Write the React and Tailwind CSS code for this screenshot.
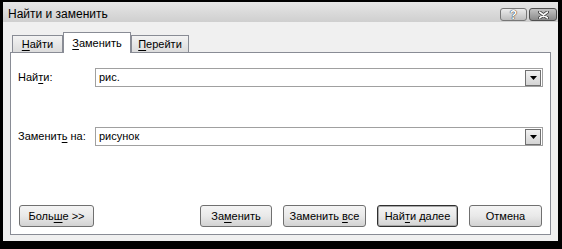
import React from 'react';

const font = { fontFamily: '"Liberation Sans", Arial, sans-serif' };

const U = ({ children }) => <span className="underline underline-offset-[2px]">{children}</span>;

const Tab = ({ active, width, children }) => (
  <div
    className={
      active
        ? `h-[21px] -mb-px z-10 border border-b-0 border-[#898c95] bg-white flex items-center justify-center ${width}`
        : `h-[17px] border border-b-0 border-[#898c95] bg-gradient-to-b from-[#f3f3f3] to-[#dcdcdc] flex items-center justify-center ${width}`
    }
  >
    <span className="text-[11px] text-black leading-none">{children}</span>
  </div>
);

const Combo = ({ value }) => (
  <div className="w-[448px] h-[19px] border border-[#a0a0a0] bg-white flex items-center justify-between pl-[3px] pr-px">
    <span className="text-[11px] text-black leading-none">{value}</span>
    <div className="w-[16px] h-[16px] border border-[#707070] bg-gradient-to-b from-[#f2f2f2] to-[#d4d4d4] flex items-center justify-center">
      <svg width="7" height="4" viewBox="0 0 7 4">
        <path d="M0 0h7L3.5 4z" fill="#000" />
      </svg>
    </div>
  </div>
);

const Button = ({ width, primary, children }) => (
  <div
    className={`h-[22px] rounded-[3px] flex items-center justify-center border bg-gradient-to-b from-[#f4f4f4] via-[#e9e9e9] to-[#d2d2d2] ${width} ${
      primary ? 'border-[#2f2f2f] shadow-[inset_0_0_0_1px_#a8a8a8]' : 'border-[#707070]'
    }`}
  >
    <span className="text-[11px] text-black leading-none">{children}</span>
  </div>
);

export default function App() {
  return (
    <div style={font} className="w-[562px] h-[249px] bg-black pt-[2px] pl-[3px] pr-[4px] pb-[8px]">
      <div className="h-full flex flex-col bg-[#ececec]">
        {/* Title bar */}
        <div className="h-[20px] flex items-start justify-between pl-[5px] pr-px bg-gradient-to-b from-[#e6e6e6] to-[#cfcfcf]">
          <span className="text-[12px] text-black leading-none mt-[6px]">Найти и заменить</span>
          <div className="flex gap-[2px] mt-[6px]">
            <div className="w-[27px] h-[13px] rounded-[3px] border border-[#777] bg-gradient-to-b from-[#ececec] to-[#bdbdbd] flex items-center justify-center">
              <span className="text-[12px] font-bold text-white leading-none [text-shadow:0_0_1px_#222,0_0_1px_#222]">?</span>
            </div>
            <div className="w-[28px] h-[13px] rounded-[3px] border border-[#505050] bg-gradient-to-b from-[#c4c4c4] to-[#8a8a8a] flex items-center justify-center">
              <svg width="11" height="8" viewBox="0 0 11 8">
                <path d="M1.5 1l8 6M9.5 1l-8 6" stroke="#333" strokeWidth="3.2" strokeLinecap="round" />
                <path d="M1.5 1l8 6M9.5 1l-8 6" stroke="#fafafa" strokeWidth="1.6" strokeLinecap="round" />
              </svg>
            </div>
          </div>
        </div>

        {/* Client area */}
        <div className="flex-1 flex flex-col px-[7px] pt-[10px] pb-[6px] bg-[#f0f0f0]">
          <div className="flex items-end pl-[2px]">
            <Tab width="w-[51px]"><U>Н</U>айти</Tab>
            <Tab active width="w-[68px]"><U>З</U>аменить</Tab>
            <Tab width="w-[58px]"><U>П</U>ерейти</Tab>
          </div>
          <div className="flex-1 border border-[#898c95] bg-white flex flex-col px-[7px] pt-[15px] pb-[7px]">
            <div className="flex items-center">
              <span className="w-[77px] text-[11px] text-black leading-none">Най<U>т</U>и:</span>
              <Combo value="рис." />
            </div>
            <div className="flex items-center mt-[40px]">
              <span className="w-[77px] text-[11px] text-black leading-none">Заменит<U>ь</U> на:</span>
              <Combo value="рисунок" />
            </div>
            <div className="flex-1" />
            <div className="flex items-center justify-between pl-px pr-px">
              <Button width="w-[75px]">Боль<U>ш</U>е &gt;&gt;</Button>
              <div className="flex gap-[11px]">
                <Button width="w-[72px]">За<U>м</U>енить</Button>
                <Button width="w-[83px]">Заменить <U>в</U>се</Button>
                <Button primary width="w-[81px]">Най<U>т</U>и далее</Button>
                <Button width="w-[73px]">Отмена</Button>
              </div>
            </div>
          </div>
        </div>
      </div>
    </div>
  );
}
